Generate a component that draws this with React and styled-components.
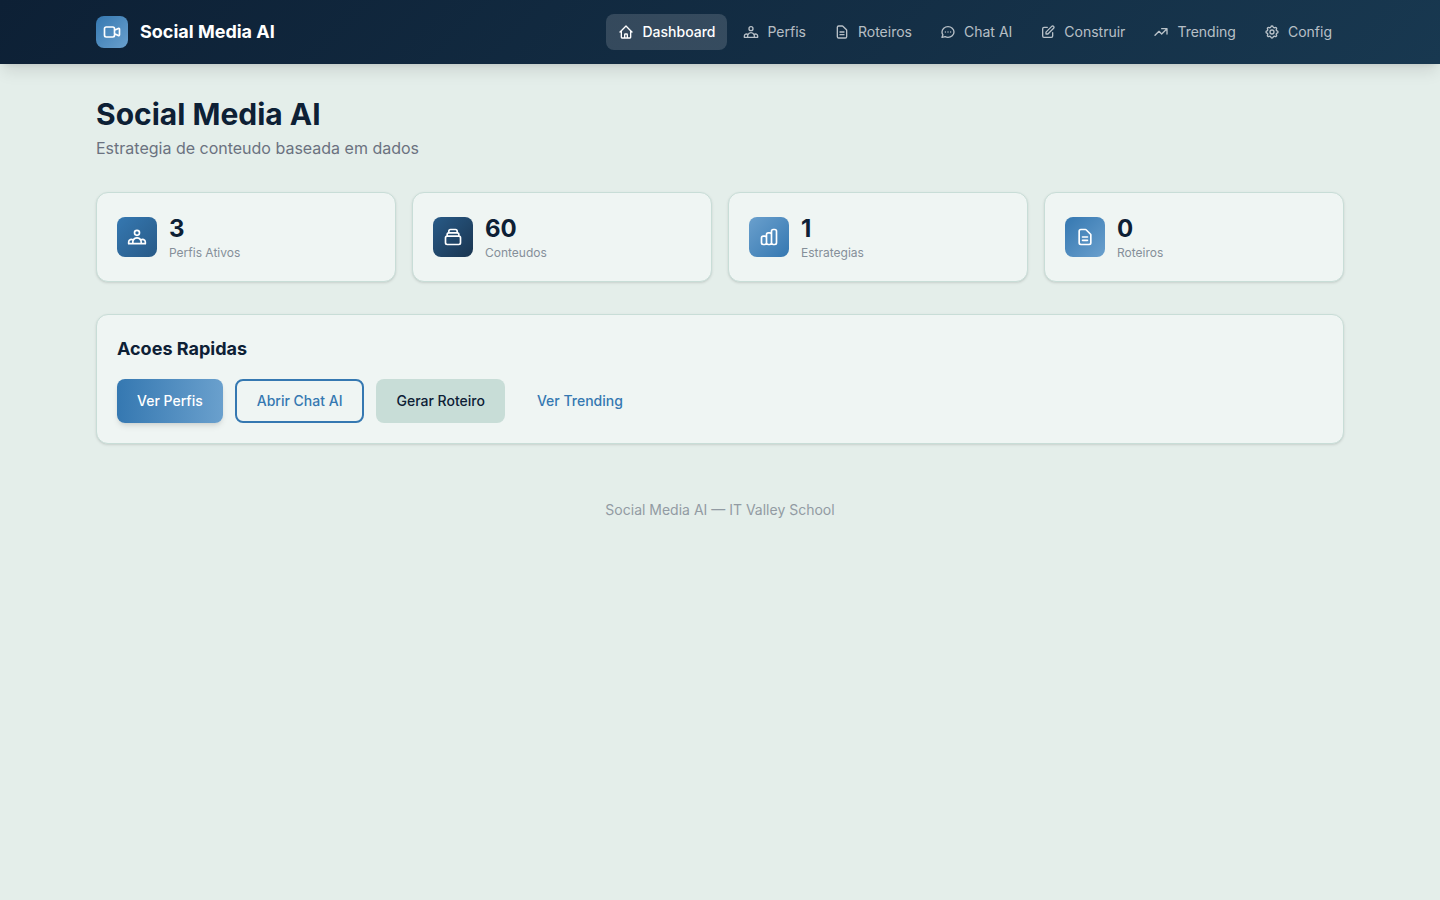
import React from 'react';
import styled, { createGlobalStyle, css } from 'styled-components';

const GlobalStyle = createGlobalStyle`
  *, *::before, *::after { box-sizing: border-box; }
  body {
    margin: 0;
    min-height: 100vh;
    background: #e4eeea;
    color: #0d2035;
    font-family: Inter, "Liberation Sans", sans-serif;
    font-size: 16px;
    line-height: 24px;
    -webkit-font-smoothing: antialiased;
  }
  h1, h2, p { margin: 0; }
`;

const TopBar = styled.header`
  background: linear-gradient(135deg, #0d2035 0%, #183850 100%);
  box-shadow: 0 10px 15px -3px rgba(0, 0, 0, 0.1), 0 4px 6px -4px rgba(0, 0, 0, 0.1);
`;

const TopBarInner = styled.div`
  width: 1248px;
  height: 64px;
  margin: 0 auto;
  display: flex;
  align-items: center;
  justify-content: space-between;
`;

const Brand = styled.div`
  display: flex;
  align-items: center;
  gap: 12px;
  color: #fff;
  font-size: 18px;
  line-height: 28px;
  font-weight: 700;
`;

const tones = {
  light: ['#3578b1', '#6aa0cd'],
  primary: ['#3578b1', '#285a87'],
  dark: ['#285a87', '#1a3550'],
  reverse: ['#6aa0cd', '#3578b1'],
};

const IconTile = styled.span`
  flex: none;
  display: flex;
  align-items: center;
  justify-content: center;
  width: ${({ $size }) => $size}px;
  height: ${({ $size }) => $size}px;
  border-radius: 8px;
  color: #fff;
  background: linear-gradient(135deg, ${({ $tone }) => tones[$tone].join(', ')});
`;

const Nav = styled.nav`
  display: flex;
  align-items: center;
  gap: 4px;
`;

const NavItem = styled.a`
  display: flex;
  align-items: center;
  gap: 8px;
  padding: 8px 12px;
  border-radius: 8px;
  font-size: 14px;
  line-height: 20px;
  font-weight: ${({ $active }) => ($active ? 500 : 400)};
  color: ${({ $active }) => ($active ? '#fff' : 'rgba(255, 255, 255, 0.7)')};
  background: ${({ $active }) => ($active ? 'rgba(255, 255, 255, 0.15)' : 'transparent')};
`;

const Glyph = styled.svg`
  flex: none;
  display: block;
  width: ${({ $size }) => $size}px;
  height: ${({ $size }) => $size}px;
  fill: none;
  stroke: currentColor;
  stroke-width: 2;
  stroke-linecap: round;
  stroke-linejoin: round;
`;

const Page = styled.main`
  width: 1248px;
  margin: 0 auto;
  padding: 32px 0;
  display: flex;
  flex-direction: column;
  gap: 32px;
`;

const Heading = styled.div`
  display: flex;
  flex-direction: column;
  gap: 4px;
`;

const Title = styled.h1`
  font-size: 30px;
  line-height: 36px;
  font-weight: 700;
`;

const Subtitle = styled.p`
  color: #6b7280;
`;

const Stats = styled.div`
  display: grid;
  grid-template-columns: repeat(4, 1fr);
  gap: 16px;
`;

const Card = styled.section`
  padding: 20px;
  border: 1px solid #c8ddd7;
  border-radius: 12px;
  background: #eff5f3;
  box-shadow: 0 1px 3px rgba(0, 0, 0, 0.1), 0 1px 2px -1px rgba(0, 0, 0, 0.1);
`;

const StatCard = styled(Card)`
  display: flex;
  align-items: center;
  gap: 12px;
`;

const StatValue = styled.p`
  font-size: 24px;
  line-height: 32px;
  font-weight: 700;
`;

const StatLabel = styled.p`
  font-size: 12px;
  line-height: 16px;
  color: #858f99;
`;

const CardTitle = styled.h2`
  margin-bottom: 16px;
  font-size: 18px;
  line-height: 28px;
  font-weight: 700;
`;

const Actions = styled.div`
  display: flex;
  gap: 12px;
`;

const buttonKinds = {
  primary: css`
    color: #fff;
    background: linear-gradient(90deg, #3578b1, #6aa0cd);
    box-shadow: 0 4px 6px -1px rgba(0, 0, 0, 0.1), 0 2px 4px -2px rgba(0, 0, 0, 0.1);
  `,
  outline: css`
    padding: 10px 20px;
    border: 2px solid #3578b1;
    color: #3578b1;
  `,
  soft: css`
    color: #0d2035;
    background: #c8ddd7;
  `,
  ghost: css`
    color: #3578b1;
  `,
};

const Button = styled.button`
  padding: 12px 20px;
  border: 0;
  border-radius: 8px;
  background: transparent;
  font: 500 14px/20px Inter, "Liberation Sans", sans-serif;
  ${({ $kind }) => buttonKinds[$kind]}
`;

const Footer = styled.footer`
  padding: 24px 0;
  text-align: center;
  font-size: 14px;
  line-height: 20px;
  color: #929ba3;
`;

const icons = {
  video: ['M15 10l4.553-2.276A1 1 0 0121 8.618v6.764a1 1 0 01-1.447.894L15 14M5 18h8a2 2 0 002-2V8a2 2 0 00-2-2H5a2 2 0 00-2 2v8a2 2 0 002 2z'],
  home: ['M3 12l2-2m0 0l7-7 7 7M5 10v10a1 1 0 001 1h3m10-11l2 2m-2-2v10a1 1 0 01-1 1h-3m-6 0a1 1 0 001-1v-4a1 1 0 011-1h2a1 1 0 011 1v4a1 1 0 001 1m-6 0h6'],
  people: ['M17 20h5v-2a3 3 0 00-5.356-1.857M17 20H7m10 0v-2c0-.656-.126-1.283-.356-1.857M7 20H2v-2a3 3 0 015.356-1.857M7 20v-2c0-.656.126-1.283.356-1.857m0 0a5.002 5.002 0 019.288 0M15 7a3 3 0 11-6 0 3 3 0 016 0z'],
  document: ['M9 12h6m-6 4h6m2 5H7a2 2 0 01-2-2V5a2 2 0 012-2h5.586a1 1 0 01.707.293l5.414 5.414a1 1 0 01.293.707V19a2 2 0 01-2 2z'],
  chat: ['M8 12h.01M12 12h.01M16 12h.01M21 12c0 4.418-4.03 8-9 8a9.863 9.863 0 01-4.255-.949L3 20l1.395-3.72C3.512 15.042 3 13.574 3 12c0-4.418 4.03-8 9-8s9 3.582 9 8z'],
  edit: ['M11 5H6a2 2 0 00-2 2v11a2 2 0 002 2h11a2 2 0 002-2v-5m-1.414-9.414a2 2 0 112.828 2.828L11.828 15H9v-2.828l8.586-8.586z'],
  trending: ['M13 7h8m0 0v8m0-8l-8 8-4-4-6 6'],
  cog: [
    'M10.325 4.317c.426-1.756 2.924-1.756 3.35 0a1.724 1.724 0 002.573 1.066c1.543-.94 3.31.826 2.37 2.37a1.724 1.724 0 001.065 2.572c1.756.426 1.756 2.924 0 3.35a1.724 1.724 0 00-1.066 2.573c.94 1.543-.826 3.31-2.37 2.37a1.724 1.724 0 00-2.572 1.065c-.426 1.756-2.924 1.756-3.35 0a1.724 1.724 0 00-2.573-1.066c-1.543.94-3.31-.826-2.37-2.37a1.724 1.724 0 00-1.065-2.572c-1.756-.426-1.756-2.924 0-3.35a1.724 1.724 0 001.066-2.573c-.94-1.543.826-3.31 2.37-2.37.996.608 2.296.07 2.572-1.065z',
    'M15 12a3 3 0 11-6 0 3 3 0 016 0z',
  ],
  stack: ['M19 11H5m14 0a2 2 0 012 2v6a2 2 0 01-2 2H5a2 2 0 01-2-2v-6a2 2 0 012-2m14 0V9a2 2 0 00-2-2M5 11V9a2 2 0 012-2m0 0V5a2 2 0 012-2h6a2 2 0 012 2v2M7 7h10'],
  chart: ['M9 19v-6a2 2 0 00-2-2H5a2 2 0 00-2 2v6a2 2 0 002 2h2a2 2 0 002-2zm0 0V9a2 2 0 012-2h2a2 2 0 012 2v10m-6 0a2 2 0 002 2h2a2 2 0 002-2m0 0V5a2 2 0 012-2h2a2 2 0 012 2v14a2 2 0 01-2 2h-2a2 2 0 01-2-2z'],
};

function Icon({ name, size }) {
  return (
    <Glyph $size={size} viewBox="0 0 24 24" aria-hidden="true">
      {icons[name].map((d) => <path key={d} d={d} />)}
    </Glyph>
  );
}

const navItems = [
  ['home', 'Dashboard'],
  ['people', 'Perfis'],
  ['document', 'Roteiros'],
  ['chat', 'Chat AI'],
  ['edit', 'Construir'],
  ['trending', 'Trending'],
  ['cog', 'Config'],
];

const stats = [
  { icon: 'people', tone: 'primary', value: 3, label: 'Perfis Ativos' },
  { icon: 'stack', tone: 'dark', value: 60, label: 'Conteudos' },
  { icon: 'chart', tone: 'reverse', value: 1, label: 'Estrategias' },
  { icon: 'document', tone: 'light', value: 0, label: 'Roteiros' },
];

export default function App() {
  return (
    <>
      <GlobalStyle />
      <TopBar>
        <TopBarInner>
          <Brand>
            <IconTile $size={32} $tone="light"><Icon name="video" size={20} /></IconTile>
            Social Media AI
          </Brand>
          <Nav>
            {navItems.map(([icon, label], i) => (
              <NavItem key={label} $active={i === 0}>
                <Icon name={icon} size={16} />
                {label}
              </NavItem>
            ))}
          </Nav>
        </TopBarInner>
      </TopBar>
      <Page>
        <Heading>
          <Title>Social Media AI</Title>
          <Subtitle>Estrategia de conteudo baseada em dados</Subtitle>
        </Heading>
        <Stats>
          {stats.map((s) => (
            <StatCard key={s.label}>
              <IconTile $size={40} $tone={s.tone}><Icon name={s.icon} size={20} /></IconTile>
              <div>
                <StatValue>{s.value}</StatValue>
                <StatLabel>{s.label}</StatLabel>
              </div>
            </StatCard>
          ))}
        </Stats>
        <Card>
          <CardTitle>Acoes Rapidas</CardTitle>
          <Actions>
            <Button $kind="primary">Ver Perfis</Button>
            <Button $kind="outline">Abrir Chat AI</Button>
            <Button $kind="soft">Gerar Roteiro</Button>
            <Button $kind="ghost">Ver Trending</Button>
          </Actions>
        </Card>
        <Footer>Social Media AI — IT Valley School</Footer>
      </Page>
    </>
  );
}
